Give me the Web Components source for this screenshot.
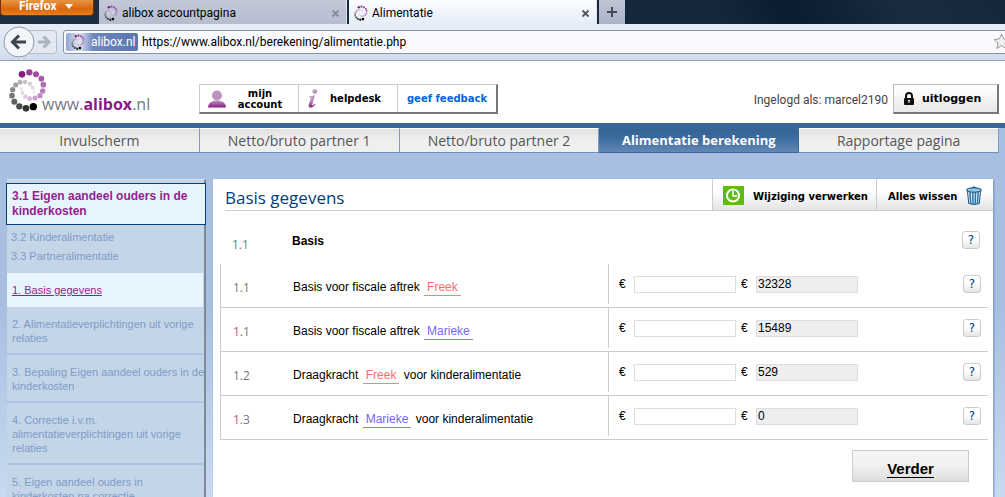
<!DOCTYPE html>
<html lang="nl">
<head>
<meta charset="utf-8">
<title>Alimentatie</title>
<style>
html, body { margin: 0; height: 100%; overflow: hidden; }
body { font: 12px/16px "Liberation Sans", Arial, sans-serif; color: #000; background: #fff; display: flex; flex-direction: column; }
browser-window, ali-header, step-nav { flex: none; }
ali-workspace { flex: 1; min-height: 0; overflow: hidden; }
</style>
</head>
<body>
<browser-window></browser-window>
<ali-header></ali-header>
<step-nav>
  <step-link>Invulscherm</step-link>
  <step-link>Netto/bruto partner 1</step-link>
  <step-link>Netto/bruto partner 2</step-link>
  <step-link active>Alimentatie berekening</step-link>
  <step-link>Rapportage pagina</step-link>
</step-nav>
<ali-workspace>
  <side-menu slot="side">
    <span slot="current">3.1 Eigen aandeel ouders in de kinderkosten</span>
    <chapter-link slot="chapters">3.2 Kinderalimentatie</chapter-link>
    <chapter-link slot="chapters">3.3 Partneralimentatie</chapter-link>
    <side-item active>1. Basis gegevens</side-item>
    <side-item>2. Alimentatieverplichtingen uit vorige relaties</side-item>
    <side-item>3. Bepaling Eigen aandeel ouders in de kinderkosten</side-item>
    <side-item>4. Correctie i.v.m. alimentatieverplichtingen uit vorige relaties</side-item>
    <side-item>5. Eigen aandeel ouders in kinderkosten na correctie</side-item>
  </side-menu>
  <form-panel>
    <span slot="title">Basis gegevens</span>
    <section-row number="1.1">Basis</section-row>
    <field-row number="1.1" value="32328">Basis voor fiscale aftrek <person-name>Freek</person-name></field-row>
    <field-row number="1.1" value="15489">Basis voor fiscale aftrek <person-name second>Marieke</person-name></field-row>
    <field-row number="1.2" value="529">Draagkracht <person-name>Freek</person-name> voor kinderalimentatie</field-row>
    <field-row number="1.3" value="0">Draagkracht <person-name second>Marieke</person-name> voor kinderalimentatie</field-row>
  </form-panel>
</ali-workspace>
<script>
const define = (name, html, setup) => {
  const template = document.createElement('template');
  template.innerHTML = html;
  customElements.define(name, class extends HTMLElement {
    constructor() {
      super();
      this.attachShadow({ mode: 'open' }).append(template.content.cloneNode(true));
    }
    connectedCallback() { if (setup) setup(this, this.shadowRoot); }
  });
};

const dots = [
  [66,43,10,'#8a1a86'],[88,37,9.5,'#97409a'],[108,43,9,'#9d4aa0'],[124,56,8.5,'#a75aaa'],[130,74,8.5,'#b06bb4'],
  [128,93,8,'#b77cbc'],[120,107,8,'#bf8cc4'],[105,114,7.5,'#c9a0ce'],[89,116,7,'#d2b2d8'],[76,110,6.5,'#dcc3e0'],
  [67,99,6,'#e6d5e9'],[64,87,5,'#efe4f1'],
  [100,140,11,'#000'],[78,145,10,'#333'],[58,139,9.5,'#4a4a4a'],[43,125,9,'#5f5f5f'],[36,107,8.5,'#777'],
  [38,89,8,'#8b8b8b'],[47,75,7.5,'#9f9f9f'],[60,67,7.5,'#b3b3b3'],[75,66,7,'#c3c3c3'],[90,72,6.5,'#d0d0d0'],
  [98,83,6,'#dedede'],[102,96,5,'#eaeaea']
].map(([x, y, r, c]) => `<circle cx="${x}" cy="${y}" r="${r}" fill="${c}"/>`).join('');

define('ali-mark', `
<style>:host{display:block;flex:none;width:16px;height:16px} svg{display:block;width:100%;height:100%}</style>
<svg viewBox="24 24 120 132" aria-hidden="true">${dots}</svg>`);

define('browser-tab', `
<style>
:host{display:flex;align-items:center;box-sizing:border-box;width:248px;height:24px;padding:2px 6px 0 4px;gap:3px;color:#000;
  background:linear-gradient(#c3c9d8,#b5bdcf);border-right:1px solid #dfe4ee}
:host([active]){background:linear-gradient(#fbfcfe,#e6edf7)}
span{flex:1}
button{border:0;padding:0;background:none;width:9px;height:12px;line-height:0;color:#868d9a}
:host([active]) button{color:#50555e}
</style>
<ali-mark></ali-mark><span><slot></slot></span>
<button aria-label="Sluiten"><svg width="9" height="9" viewBox="0 0 9 9"><path d="M1.5 1.5l6 6M7.5 1.5l-6 6" stroke="currentColor" stroke-width="1.8"/></svg></button>`);

define('browser-window', `
<style>
:host{display:block;font:12px/16px Roboto,"Open Sans",sans-serif}
.tabs{display:flex;gap:2px;height:24px;background:linear-gradient(60deg,#1d2f43 0,#14263a 72%,#0b1c2f 78%,#1b2c40 90%,#16273a)}
.app{box-sizing:border-box;width:94px;height:16px;margin-right:3px;padding:0 0 2px 18px;border:1px solid #733000;border-top:0;border-radius:0 0 4px 4px;
 background:linear-gradient(#e9953f,#d9660f 60%,#e77f1c);color:#fff;font:bold 12px/13px Roboto,sans-serif;display:flex;align-items:center;gap:8px}
.new{width:26px;height:24px;padding:0;border:0;background:linear-gradient(#bfc6d6,#aab3c6);line-height:0}
.bar{display:flex;align-items:center;height:36px;background:linear-gradient(#e8eef8,#d0dcec);border-bottom:1px solid #999ea5}
.nav{flex:none;display:block;width:57px;height:36px;margin-left:3px}
.address{flex:1;display:flex;align-items:center;box-sizing:border-box;height:24px;margin:0 -14px 0 3px;padding:0 8px 0 2px;gap:4px;border:1px solid #8b929d;border-radius:3px;background:#f8fafe}
.id{display:flex;align-items:center;gap:5px;box-sizing:border-box;width:72px;height:18px;padding:0 3px 0 4px;border-radius:2px;color:#fff;background:linear-gradient(90deg,#8fa3cf,#d5dcee 16%,#d5dcee 20%,#6f87bd 38%,#5a76b0)}
input{flex:1;min-width:0;height:20px;padding:0;border:0;outline:0;background:none;font:inherit;color:#000}
</style>
<div class="tabs">
 <button class="app">Firefox <svg width="8" height="5" aria-hidden="true"><path d="M0 0h8L4 5z" fill="#fff"/></svg></button>
 <browser-tab>alibox accountpagina</browser-tab><browser-tab active>Alimentatie</browser-tab>
 <button class="new" aria-label="Nieuw tabblad"><svg width="12" height="12"><path d="M6 1v10M1 6h10" stroke="#454b55" stroke-width="2"/></svg></button>
</div>
<div class="bar">
 <svg class="nav" viewBox="3 24 57 36" role="img" aria-label="Vorige en volgende">
  <rect x="20.500" y="30.500" width="36" height="23" rx="3" fill="#e3e9f3" stroke="#b4bdca"/>
  <circle cx="19" cy="42" r="15" fill="#f3f5f9" stroke="#8e97a5"/>
  <path d="M26 42H13M19 35.500L12.500 42l6.500 6.500" fill="none" stroke="#3c444f" stroke-width="3"/>
  <path d="M38 42h10M43.500 36.500L49 42l-5.500 5.500" fill="none" stroke="#a9b3bf" stroke-width="3"/>
 </svg>
 <div class="address"><span class="id"><ali-mark></ali-mark>alibox.nl</span>
  <input aria-label="Adres" value="https://www.alibox.nl/berekening/alimentatie.php">
  <svg width="17" height="18" viewBox="0 0 17 18" aria-hidden="true"><path d="M8.500 1l2.200 5 5.300.5-4 3.600 1.200 5.400-4.700-2.800-4.700 2.800L5 10.100 1 6.500 6.300 6z" fill="#eee" stroke="#999"/></svg>
 </div>
</div>`);

define('ali-header', `
<style>
:host{display:flex;align-items:flex-start;height:62px;padding:0 6px 0 8px;background:#fff}
.logo{display:flex;align-items:flex-start;width:191px;color:#77777a;text-decoration:none;font:16px/22px "Open Sans",sans-serif}
.logo ali-mark{width:40px;height:44px;margin:7px -6px 0 0}
.logo span{margin-top:32px;white-space:nowrap}
b{color:#8a1a86}
.links{display:flex;margin-top:23px;border:1px solid #ccc;border-right:2px solid #777;border-bottom:2px solid #777}
button{font:bold 10px/11px "DejaVu Sans",Verdana,sans-serif;color:#000;display:flex;align-items:center}
.links button{box-sizing:border-box;width:99px;height:27px;padding:0 8px;gap:4px;border:0;border-right:1px solid #ccc;background:#fff}
.links button:last-child{width:98px;padding:0;justify-content:center;border:0;color:#0066dc;white-space:nowrap}
.links svg{flex:none}.links span{flex:1;text-align:center}
.who{margin:31px 5px 0 auto;color:#444;font:12px/16px Roboto,sans-serif}
.out{box-sizing:border-box;width:106px;height:30px;margin-top:23px;padding:0 9px;gap:7px;border:1px solid #bbb;border-right:2px solid #777;border-bottom:2px solid #777;background:linear-gradient(#fff,#e8e8e8);font-size:11px}
</style>
<a class="logo" href="#"><ali-mark></ali-mark><span>www.<b>alibox</b>.nl</span></a>
<div class="links">
 <button><svg width="18" height="18" viewBox="0 0 18 18" aria-hidden="true"><defs><linearGradient id="g" x2="0" y2="1"><stop offset="0" stop-color="#bd93c3"/><stop offset="1" stop-color="#8a1a86"/></linearGradient></defs><path d="M0 17.500C0 13 4 10.500 9 10.500s9 2.500 9 7z" fill="url(#g)"/><circle cx="9" cy="5.500" r="5" fill="#bd93c3"/></svg><span>mijn account</span></button>
 <button><svg width="11" height="19" viewBox="0 0 11 19" aria-hidden="true"><defs><linearGradient id="i" x2="0" y2="1"><stop offset=".4" stop-color="#bd93c3"/><stop offset="1" stop-color="#8a1a86"/></linearGradient></defs><circle cx="7.800" cy="2.600" r="2.400" fill="#bd93c3"/><path d="M2 7.500C4.500 7.300 6 6.800 8 6.300L5.300 15.500c-.4 1.400.6 1.200 2.500-.8l.7.500C5.800 19.500 1 19.600 1.700 16L3.800 9.300C4 8.400 3.500 8.300 2 8.300z" fill="url(#i)"/></svg><span>helpdesk</span></button>
 <button>geef feedback</button>
</div>
<span class="who">Ingelogd als: marcel2190</span>
<button class="out"><svg width="12" height="14" viewBox="0 0 12 14" aria-hidden="true"><path d="M3 7V4a3 3 0 016 0v3" fill="none" stroke="#111" stroke-width="2"/><rect x="1" y="6" width="10" height="7" rx="1" fill="#111"/><path d="M6 8v3M5 8.500h2" stroke="#fff"/></svg>uitloggen</button>`);

define('step-nav', `
<style>:host{display:block;border-top:5px solid #3a6799;background:#a8bfe2} nav{display:flex;padding-right:6px}</style>
<nav><slot></slot></nav>`);

define('step-link', `
<style>
:host{display:block;flex:1}
a{display:block;box-sizing:border-box;height:25px;border-right:1px solid #7c9cc4;border-bottom:1px solid #6c90bb;border-top:1px solid #fff;background:linear-gradient(#e2e2e2,#efefef 50%);
 color:#555;text-align:center;text-decoration:none;white-space:nowrap;font:14px/23px "Open Sans",sans-serif}
:host([active]) a{background:linear-gradient(#356394,#3c6b9f 40%,#6487b4);border-color:#3a6799;color:#fff;font-weight:bold;font-size:13px}
</style><a href="#"><slot></slot></a>`);

define('ali-workspace', `
<style>
:host{display:flex;gap:7px;padding:26px 12px 0 7px;background:linear-gradient(#a8bfe2 0,#a8bfe2 45%,#c8daf1)}
.side{flex:none;width:199px;display:flex}.main{flex:1;display:flex}
</style>
<div class="side"><slot name="side"></slot></div><div class="main"><slot></slot></div>`);

define('side-menu', `
<style>
:host{display:block;flex:1;box-sizing:border-box;padding-top:3px;background:#c4d5e8;border-top:1px solid #d8e4f2;border-right:2px solid #7f8a99}
.current{display:block;margin:0 -2px 0 -1px;padding:5px;border:1px solid #004080;background:#e6f5fd;color:#931e8f;font-weight:bold;line-height:15px;text-decoration:none}
.chapters{padding:3px 4px 7px}
</style>
<nav><a class="current" href="#"><slot name="current"></slot></a><div class="chapters"><slot name="chapters"></slot></div><slot></slot></nav>`);

define('chapter-link', `
<style>:host{display:block} a{display:block;color:#7f9cc7;font-size:11px;line-height:19px;text-decoration:none}</style>
<a href="#"><slot></slot></a>`);

define('side-item', `
<style>
:host{display:block;padding:10px 0 8px 5px;margin-right:1px;border-bottom:2px solid #abc2e2;font-size:11px;line-height:14px}
:host([active]){background:#e6f5fd;border-color:#e6f5fd}
a{display:block;margin-right:-3px;color:#7f9cc7;text-decoration:none}
:host([active]) a{color:#931e8f;text-decoration:underline}
</style><a href="#"><slot></slot></a>`);

define('form-panel', `
<style>
:host{display:block;flex:1;background:#fff;box-shadow:1px 1px 2px #7690b8}
header{display:flex;height:32px;padding-left:12px}
h1{flex:1;margin:0;border-bottom:1px solid #ccc;color:#004080;font:17px/38px "Open Sans",sans-serif;height:31px}
header button{box-sizing:border-box;display:flex;align-items:center;padding:4px 8px 0 20px;border:0;border-left:1px solid #ccc;border-bottom:1px solid #ccc;background:linear-gradient(#fff 40%,#e4e4e4);font:bold 10px/16px "DejaVu Sans",Verdana,sans-serif;white-space:nowrap;color:#000}
header .clock{width:164px;padding-left:10px;gap:9px}
header .clear{width:117px;padding-left:11px;gap:9px}
.rows{padding:6px 5px 0 7px}
svg{flex:none;margin-top:-2px}
.actions{display:flex;justify-content:flex-end;padding:10px 24px}
.next{width:117px;height:32px;box-sizing:border-box;padding:5px 0 0;border:1px solid #ccc;background:linear-gradient(#f3f3f3 40%,#dedede);font:bold 15px/18px "Liberation Sans",Arial,sans-serif;color:#000}
.next span{border-bottom:1px solid #000}
</style>
<header><h1><slot name="title"></slot></h1>
<button class="clock"><svg width="21" height="19" viewBox="0 0 21 19" aria-hidden="true"><rect width="21" height="19" fill="#5fbb10"/><circle cx="10" cy="9.500" r="6" fill="none" stroke="#fff" stroke-width="2"/><path d="M10 5v5h4" fill="none" stroke="#fff" stroke-width="1.500"/></svg>Wijziging verwerken</button>
<button class="clear">Alles wissen <svg width="16" height="19" viewBox="0 0 16 19" aria-hidden="true"><path d="M1.500 5h13l-1.200 12.500q-5.300 2-10.600 0z" fill="#e6f3fb" stroke="#17507f"/><path d="M4 6l.7 12M6.800 6l.2 12.500M9.500 6l-.3 12.500M12.200 6l-.8 12" stroke="#2377b0" stroke-width="1.500"/><ellipse cx="8" cy="4" rx="7.500" ry="2.200" fill="#8ec4e4" stroke="#17507f"/><path d="M5.500 2Q8-.5 10.500 2" fill="none" stroke="#17507f"/></svg></button></header>
<div class="rows"><slot></slot></div>
<div class="actions"><button class="next"><span>Verder</span></button></div>`);

define('help-button', `
<style>:host{display:block;flex:none}
button{display:block;box-sizing:border-box;width:18px;height:18px;padding:0;border:1px solid #ccc;border-radius:3px;background:linear-gradient(#fff 40%,#e6e6e6);color:#004080;font:12px/16px "DejaVu Sans",Verdana,sans-serif}</style>
<button aria-label="Uitleg">?</button>`);

define('section-row', `
<style>
:host{display:flex;box-sizing:border-box;height:47px;padding:14px 8px 0 12px}
.number{width:60px;padding-top:6px;color:#777;font:12px/16px "Open Sans",sans-serif}
h2{flex:1;margin:0;padding-top:2px;font:bold 12px/16px "Liberation Sans",Arial,sans-serif}
</style>
<span class="number"></span><h2><slot></slot></h2><help-button></help-button>`,
(host, root) => { root.querySelector('.number').textContent = host.getAttribute('number'); });

define('field-row', `
<style>
:host{display:grid;grid-template-columns:72px 1fr 380px;box-sizing:border-box;height:44px;border-left:1px solid #ccc;border-bottom:1px solid #ccc;line-height:16px}
.number{padding:16px 0 0 12px;color:#777;font:12px/16px "Open Sans",sans-serif}
label{padding-top:15px;white-space:nowrap}
.values{display:flex;align-items:center;box-sizing:border-box;height:40px;padding:0 7px 0 10px;border-left:1px solid #ccc}
.values span{width:15px}
input{box-sizing:border-box;width:102px;height:17px;margin-right:5px;padding:0 1px;border:1px solid #ddd;border-radius:0;background:#fff;font:12px/15px "Liberation Sans",Arial,sans-serif;color:#000}
input[readonly]{background:#eee}
help-button{margin-left:auto}
</style>
<span class="number"></span><label for="amount"><slot></slot></label>
<div class="values"><span>€</span><input id="amount" type="text"><span>€</span><input class="result" type="text" readonly aria-label="Berekend bedrag"><help-button></help-button></div>`,
(host, root) => {
  root.querySelector('.number').textContent = host.getAttribute('number');
  root.querySelector('.result').value = host.getAttribute('value');
});

define('person-name', `
<style>:host{display:inline-block;margin:0 1px;padding:0 3px;border-bottom:1px solid #ff8080;color:#ff6b6b;line-height:15px}
:host([second]){border-color:#8080ff;color:#7468f5}</style><slot></slot>`);
</script>
</body>
</html>
